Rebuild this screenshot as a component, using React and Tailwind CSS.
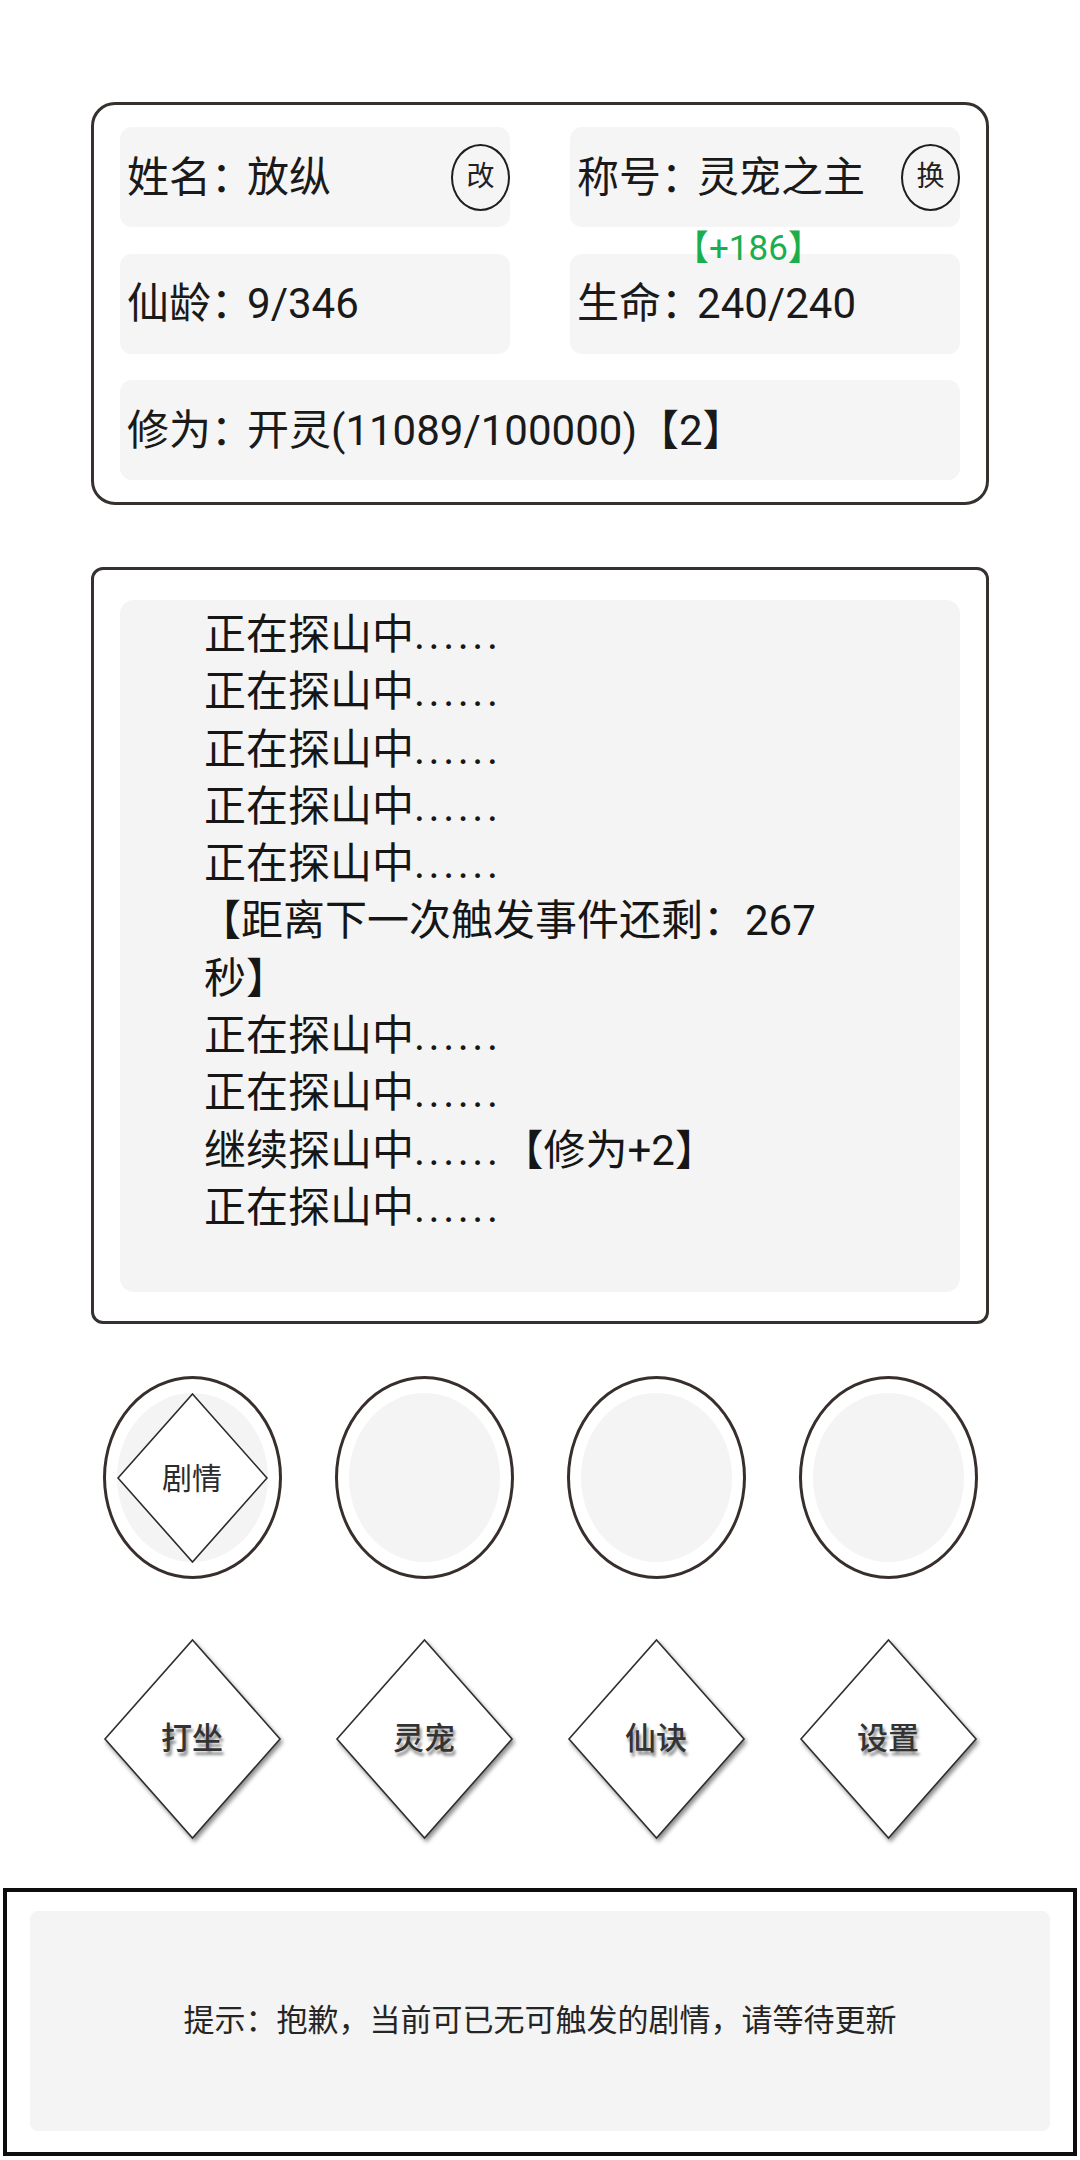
import React from "react";

const font = "font-['Roboto','Noto_Sans_CJK_SC',sans-serif]";

// full-width colon, pulled a little tighter to the text that follows
const Colon = () => <span className="tracking-[-6px]">：</span>;

const Dots = () => <span className="tracking-[3.5px]">......</span>;

const InfoBox = ({ children, className = "" }) => (
  <div
    className={`relative h-[100px] rounded-[12px] bg-[#f5f5f5] flex items-center pl-[7px] ${className}`}
  >
    {children}
  </div>
);

const SmallCircle = ({ label }) => (
  <div className="ml-auto w-[59px] h-[67px] rounded-[50%] border-2 border-[#1e1e1e] flex items-center justify-center text-[28px] text-[#222]">
    {label}
  </div>
);

const OvalButton = ({ label }) => (
  <div className="w-[179px] h-[203px] rounded-[50%] border-[3px] border-[#382f2d] px-[11px] py-[14px]">
    <div className="w-full h-full rounded-[50%] bg-[#f4f4f4] grid place-items-center">
      {label && (
        <>
          <svg
            width="151"
            height="170"
            viewBox="0 0 151 170"
            className="col-start-1 row-start-1"
          >
            <polygon
              points="75.5,1 150,85 75.5,169 1,85"
              fill="#ffffff"
              stroke="#2a2a2a"
              strokeWidth="1.6"
            />
          </svg>
          <span className="relative col-start-1 row-start-1 text-[30px] text-[#2b2b2b]">
            {label}
          </span>
        </>
      )}
    </div>
  </div>
);

const DiamondButton = ({ label }) => (
  <div className="w-[179px] h-[200px] grid place-items-center">
    <svg
      width="179"
      height="200"
      viewBox="0 0 179 200"
      className="col-start-1 row-start-1 overflow-visible [filter:drop-shadow(2px_3px_2px_rgba(0,0,0,0.45))]"
    >
      <polygon
        points="89.5,1 177,100 89.5,199 2,100"
        fill="#ffffff"
        stroke="#2e2e2e"
        strokeWidth="1.6"
      />
    </svg>
    <span className="relative col-start-1 row-start-1 text-[31px] font-medium text-[#333] [text-shadow:2px_4px_3px_rgba(0,0,0,0.45)]">
      {label}
    </span>
  </div>
);

const Searching = () => (
  <div>
    正在探山中
    <Dots />
  </div>
);

export default function App() {
  return (
    <div className={`w-[1080px] h-[2160px] bg-white text-[#1a1a1a] ${font}`}>
      {/* player info card */}
      <div className="ml-[91px] w-[898px] mt-[102px] rounded-[24px] border-[3px] border-[#36302e] px-[26px] pt-[22px] pb-[22px]">
        <div className="grid grid-cols-2 gap-x-[60px] gap-y-[26.5px] text-[42px]">
          <InfoBox>
            <span>
              姓名
              <Colon />
              放纵
            </span>
            <SmallCircle label="改" />
          </InfoBox>
          <InfoBox>
            <span>
              称号
              <Colon />
              灵宠之主
            </span>
            <SmallCircle label="换" />
          </InfoBox>
          <InfoBox>
            <span>
              仙龄
              <Colon />
              9/346
            </span>
          </InfoBox>
          <InfoBox>
            <span className="absolute top-[-23px] left-[104px] text-[35px] leading-none text-[#1aae4e]">
              【+186】
            </span>
            <span>
              生命
              <Colon />
              240/240
            </span>
          </InfoBox>
          <InfoBox className="col-span-2">
            <span>
              修为
              <Colon />
              开灵(11089/100000)【2】
            </span>
          </InfoBox>
        </div>
      </div>

      {/* log card */}
      <div className="ml-[91px] w-[898px] mt-[62px] rounded-[12px] border-[3px] border-[#36302e] px-[26px] pt-[30px] pb-[29px]">
        <div className="h-[692px] rounded-[14px] bg-[#f4f4f4] pl-[84px] pt-[6px] text-[42px] leading-[57.3px] text-[#161616]">
          <Searching />
          <Searching />
          <Searching />
          <Searching />
          <Searching />
          <div className="-ml-[5px]">【距离下一次触发事件还剩：267</div>
          <div>秒】</div>
          <Searching />
          <Searching />
          <div>
            继续探山中
            <Dots />
            【修为+2】
          </div>
          <Searching />
        </div>
      </div>

      {/* oval buttons */}
      <div className="mt-[52px] flex justify-center gap-[53px]">
        <OvalButton label="剧情" />
        <OvalButton />
        <OvalButton />
        <OvalButton />
      </div>

      {/* diamond buttons */}
      <div className="mt-[60px] flex justify-center gap-[53px]">
        <DiamondButton label="打坐" />
        <DiamondButton label="灵宠" />
        <DiamondButton label="仙诀" />
        <DiamondButton label="设置" />
      </div>

      {/* tip box */}
      <div className="mt-[49px] mx-[3px] h-[268px] border-4 border-[#0d0d0d] px-[23px] pt-[19px]">
        <div className="h-[220px] rounded-[8px] bg-[#f4f4f4] flex items-center justify-center text-[31px] text-[#252525]">
          提示：抱歉，当前可已无可触发的剧情，请等待更新
        </div>
      </div>
    </div>
  );
}
